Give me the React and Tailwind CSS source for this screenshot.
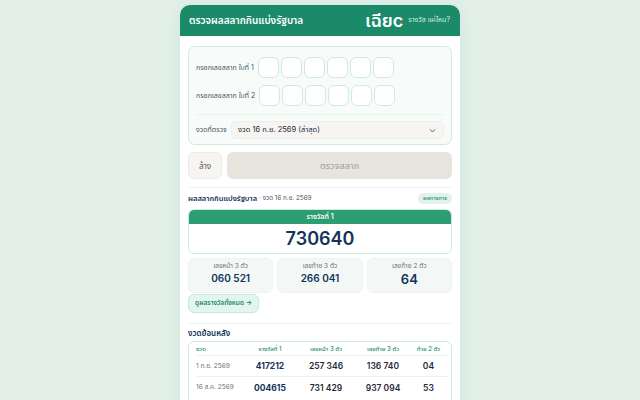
import React from "react";

function Row({ label, w }) {
  return (
    <div className="flex items-center">
      <span className={"text-[7px] leading-none text-[#4b5563] whitespace-nowrap " + w}>{label}</span>
      <div className="flex gap-[2px]">
        {[0, 1, 2, 3, 4, 5].map((i) => (
          <div key={i} className="w-[21px] h-[21px] rounded-[6px] border border-[#cdebe0] bg-white" />
        ))}
      </div>
    </div>
  );
}

function Sub({ label, value, big }) {
  return (
    <div className="flex-1 h-[35px] rounded-[6px] bg-[#f3f8f6] border border-[#edf4f1] flex flex-col items-center pt-[3px]">
      <span className="text-[6.5px] leading-[9px] text-[#6b7280]">{label}</span>
      <span className={(big ? "text-[13px] leading-[16px] " : "text-[10px] leading-[14px] ") + "font-semibold text-[#12345a]"}>{value}</span>
    </div>
  );
}

const cols = "grid grid-cols-[50px_48px_64px_50px_1fr] items-center";

function HistoryRow({ d, a, b, c, e, border }) {
  return (
    <div className={cols + " h-[21px] pt-[1px] " + (border ? "border-b border-[#eef3f1]" : "")}>
      <span className="text-[6.5px] text-[#6b7280] whitespace-nowrap">{d}</span>
      <span className="text-[8.5px] font-bold text-[#12345a] text-center">{a}</span>
      <span className="text-[8.5px] font-semibold text-[#1f2937] text-center">{b}</span>
      <span className="text-[8.5px] font-semibold text-[#1f2937] text-center">{c}</span>
      <span className="text-[8.5px] font-semibold text-[#1f2937] text-center">{e}</span>
    </div>
  );
}

export default function App() {
  return (
    <div
      className="h-[400px] overflow-hidden bg-[#e3f0ea] flex justify-center pt-[5px]"
      style={{ fontFamily: '"Inter","Noto Sans Thai","Noto Sans",sans-serif' }}
    >
      <div className="w-[280px] h-[420px] shrink-0 rounded-t-[10px] bg-white overflow-hidden shadow-[0_2px_14px_rgba(26,138,104,0.12)]">
        <header className="h-[31px] bg-[#1a8a68] flex items-center justify-between pl-[9px] pr-[10px] text-white">
          <span className="text-[10px] font-semibold whitespace-nowrap">ตรวจผลสลากกินแบ่งรัฐบาล</span>
          <div className="flex items-center gap-[5px]">
            <span className="text-[18px] font-semibold leading-none flex items-center">
              เฉีย
              <span className="relative">
                c
                <span className="absolute right-[1px] top-[8px] w-[2px] h-[2px] rounded-full bg-[#e5533d]" />
              </span>
            </span>
            <span className="text-[7px] text-[#d5efe5] whitespace-nowrap">รางวัล แค่ไหน?</span>
          </div>
        </header>

        <div className="px-[8px] pt-[10px]">
          <section className="h-[99px] rounded-[7px] border border-[#cdebe0] bg-[#f7fcfa] px-[7px] pt-[10px]">
            <div className="flex flex-col gap-[7px]">
              <Row label="กรอกเลขสลาก ใบที่ 1" w="w-[61.5px]" />
              <Row label="กรอกเลขสลาก ใบที่ 2" w="w-[63px]" />
            </div>
            <div className="mt-[8px] border-t border-[#e8f2ee] pt-[6px] flex items-center">
              <span className="text-[7px] text-[#4b5563] w-[35px] whitespace-nowrap">งวดที่ตรวจ</span>
              <div className="flex-1 h-[18px] rounded-[5px] bg-[#f6f5f1] border border-[#efeee9] flex items-center justify-between pl-[6px] pr-[6px]">
                <span className="text-[7.5px] text-[#1f2937] whitespace-nowrap">งวด 16 ก.ย. 2569 (ล่าสุด)</span>
                <svg width="9" height="9" viewBox="0 0 24 24" fill="none" stroke="#4b5563" strokeWidth="2.5"><path d="M5 9l7 7 7-7" /></svg>
              </div>
            </div>
          </section>

          <div className="flex gap-[5px] mt-[7px]">
            <button className="w-[34px] h-[27px] rounded-[6px] bg-[#f6f5f1] border border-[#ecebe5] text-[8px] text-[#4b5563]">ล้าง</button>
            <button className="flex-1 h-[27px] rounded-[6px] bg-[#e6e4dd] text-[9px] font-medium text-[#aaa89f]">ตรวจสลาก</button>
          </div>

          <div className="mt-[8px] border-t border-[#eef3f0] pt-[3px] flex items-center justify-between h-[19px]">
            <div className="flex items-center whitespace-nowrap">
              <span className="text-[7.5px] font-semibold text-[#12345a]">ผลสลากกินแบ่งรัฐบาล</span>
              <span className="text-[6.3px] text-[#4b5563] ml-[2px]">· งวด 16 ก.ย. 2569</span>
            </div>
            <span className="w-[34px] h-[11px] rounded-full bg-[#e2f3ec] text-[5.5px] font-medium text-[#1a8a68] flex items-center justify-center">ผลทางการ</span>
          </div>

          <div className="mt-[3px] rounded-[6px] border border-[#cdebe0] overflow-hidden">
            <div className="h-[14px] bg-[#2d9e74] text-white text-[7px] font-semibold flex items-center justify-center">รางวัลที่ 1</div>
            <div className="h-[29px] flex items-center justify-center text-[18px] font-semibold text-[#12345a]">730640</div>
          </div>

          <div className="flex gap-[4px] mt-[4px]">
            <Sub label="เลขหน้า 3 ตัว" value="060 521" />
            <Sub label="เลขท้าย 3 ตัว" value="266 041" />
            <Sub label="เลขท้าย 2 ตัว" value="64" big />
          </div>

          <button className="mt-[1px] block w-[71px] h-[19px] rounded-[6px] bg-[#e2f5ee] border border-[#c5e9db] text-[6.5px] font-semibold text-[#1a8a68] whitespace-nowrap">ดูผลรางวัลทั้งหมด →</button>

          <div className="mt-[10px] border-t border-[#eef3f0] pt-[2px]">
            <div className="text-[8px] font-semibold text-[#12345a] h-[14px] flex items-center">งวดย้อนหลัง</div>
            <div className="mt-[1px] rounded-[6px] border border-[#cdebe0] pl-[7px] pr-[2px] h-[70px]">
              <div className={cols + " h-[14px] border-b border-[#eef3f1] text-[6px] font-medium text-[#1a8a68]"}>
                <span>งวด</span>
                <span className="text-center">รางวัลที่ 1</span>
                <span className="text-center">เลขหน้า 3 ตัว</span>
                <span className="text-center">เลขท้าย 3 ตัว</span>
                <span className="text-center">ท้าย 2 ตัว</span>
              </div>
              <HistoryRow d="1 ก.ย. 2569" a="417212" b="257 346" c="136 740" e="04" border />
              <HistoryRow d="16 ส.ค. 2569" a="004615" b="731 429" c="937 094" e="53" />
            </div>
          </div>
        </div>
      </div>
    </div>
  );
}
